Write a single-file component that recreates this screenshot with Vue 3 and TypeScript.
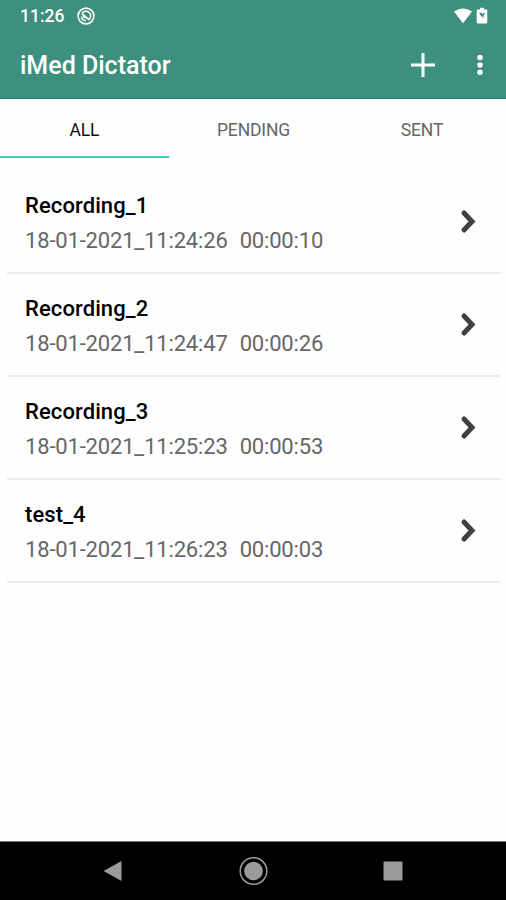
<script setup lang="ts">
import { ref } from 'vue'

interface Recording {
  name: string
  created: string
  duration: string
}

const tabs: string[] = ['ALL', 'PENDING', 'SENT']
const activeTab = ref('ALL')

const recordings: Recording[] = [
  { name: 'Recording_1', created: '18-01-2021_11:24:26', duration: '00:00:10' },
  { name: 'Recording_2', created: '18-01-2021_11:24:47', duration: '00:00:26' },
  { name: 'Recording_3', created: '18-01-2021_11:25:23', duration: '00:00:53' },
  { name: 'test_4', created: '18-01-2021_11:26:23', duration: '00:00:03' },
]
</script>

<template>
  <div class="screen">
    <header class="top">
      <div class="status">
        <span class="clock">11:26</span>
        <svg class="notice" width="18" height="18" viewBox="0 0 18 18" fill="none" stroke="currentColor">
          <circle cx="9" cy="9" r="7.9" stroke-width="1.6" />
          <path d="M5 6.500A4.700 4.700 0 1 1 12 12.600M4.400 9.500A4.700 4.700 0 0 0 9 13.700" stroke-width="1.500" />
          <path d="M5 6.800L12.500 13M6 9.500Q8 11 10 10.500" stroke-width="1.700" />
        </svg>
        <span class="fill"></span>
        <svg width="18" height="16" viewBox="0 0 18 16" fill="currentColor">
          <path d="M0 3.4Q9-2.4 18 3.4L9 15.2Z" />
        </svg>
        <svg class="battery" width="12" height="18" viewBox="0 0 12 18">
          <path fill="currentColor" d="M4 .8h4v1.700h2q1.300 0 1.300 1.300v11.400q0 1.300-1.300 1.300H2Q.7 16.500.7 15.200V3.800Q.7 2.500 2 2.500h2Z" />
          <path d="M3 5.800h2.600l.8 1.500 1-1.500h1.300L6.800 12.500V9.500H5.300Z" class="bolt" />
        </svg>
      </div>
      <div class="bar">
        <h1>iMed Dictator</h1>
        <button class="icon" aria-label="Add recording">
          <svg width="24" height="24" viewBox="0 0 24 24" stroke="currentColor" stroke-width="3">
            <path d="M12 0v24M0 12h24" />
          </svg>
        </button>
        <button class="icon more" aria-label="More options">
          <svg width="6" height="22" viewBox="0 0 6 22" fill="currentColor">
            <circle cx="3" cy="3.500" r="2.700" /><circle cx="3" cy="11" r="2.700" /><circle cx="3" cy="18.300" r="2.700" />
          </svg>
        </button>
      </div>
    </header>
    <nav class="tabs">
      <button v-for="tab in tabs" :key="tab" class="tab" :class="{ active: tab === activeTab }" @click="activeTab = tab">
        {{ tab }}
      </button>
    </nav>
    <main class="list">
      <article v-for="item in recordings" :key="item.name" class="row">
        <div class="details">
          <h2>{{ item.name }}</h2>
          <p><span>{{ item.created }}</span><span>{{ item.duration }}</span></p>
        </div>
        <svg width="18" height="26" viewBox="0 0 18 26" fill="none" stroke="currentColor" stroke-width="5" stroke-linecap="round" stroke-linejoin="miter">
          <path d="M4 4L12 12.500L4 21" />
        </svg>
      </article>
    </main>
    <footer class="nav">
      <svg width="20" height="22" viewBox="0 0 20 22"><path fill="currentColor" d="M.5 11L18.500 1v20Z" /></svg>
      <svg width="30" height="30" viewBox="0 0 30 30">
        <circle cx="15.500" cy="15" r="13.300" fill="none" stroke="currentColor" stroke-width="1.500" />
        <circle cx="15.500" cy="15" r="9.300" fill="currentColor" />
      </svg>
      <svg width="20" height="20" viewBox="0 0 20 20"><rect x=".5" y=".5" width="19" height="19" rx="1" fill="currentColor" /></svg>
    </footer>
  </div>
</template>

<style>
body {
  margin: 0;
  background: #fff;
}
</style>

<style scoped>
.screen {
  display: flex;
  flex-direction: column;
  width: 506px;
  height: 900px;
  overflow: hidden;
  background: #fefefe;
  font-family: Roboto, "Liberation Sans", sans-serif;
}
h1, h2, p {
  margin: 0;
}
svg {
  display: block;
  flex: none;
}
button {
  padding: 0;
  border: 0;
  background: none;
  color: inherit;
  font: inherit;
}
.top {
  box-sizing: border-box;
  height: 99px;
  border-bottom: 1px solid #268371;
  background: #3d907d;
  color: #fff;
}
.status {
  display: flex;
  align-items: center;
  height: 31px;
  padding: 0 18px 0 20px;
}
.clock {
  width: 57px;
  font-size: 17.5px;
  font-weight: 500;
}
.fill {
  flex: 1;
}
.battery {
  margin-left: 4px;
}
.bolt {
  fill: #3d907d;
}
.bar {
  display: flex;
  align-items: center;
  height: 67px;
  padding: 0 23px 0 20px;
}
h1 {
  flex: 1;
  padding-top: 3px;
  font-size: 25px;
  font-weight: 500;
  line-height: 30px;
}
.more {
  margin-left: 42px;
}
.tabs {
  display: grid;
  grid-template-columns: 169px 169px 168px;
  height: 59px;
}
.tab {
  padding-top: 4px;
  border-bottom: 2px solid transparent;
  color: #666;
  font-size: 17.5px;
  line-height: 20px;
  letter-spacing: -0.15px;
}
.active {
  border-color: #43cdb8;
  color: #111;
}
.list {
  flex: 1;
  padding: 13px 6px 0 7px;
}
.row {
  box-sizing: border-box;
  display: flex;
  justify-content: space-between;
  align-items: center;
  height: 103px;
  padding: 0 22px 0 18px;
  border-bottom: 2px solid #ececec;
  color: #404040;
}
.details {
  padding-top: 3px;
}
h2 {
  padding-top: 1px;
  color: #000;
  font-size: 22px;
  font-weight: 500;
  line-height: 35px;
  letter-spacing: 0.1px;
}
p {
  display: flex;
  gap: 12px;
  color: #666;
  font-size: 22px;
  font-weight: 400;
  line-height: 36px;
  letter-spacing: -0.17px;
}
.nav {
  box-sizing: border-box;
  display: flex;
  justify-content: space-between;
  align-items: center;
  height: 59px;
  padding: 0 103px;
  border-top: 1px solid #777;
  background: #000;
  color: #9b9b9b;
}
</style>
